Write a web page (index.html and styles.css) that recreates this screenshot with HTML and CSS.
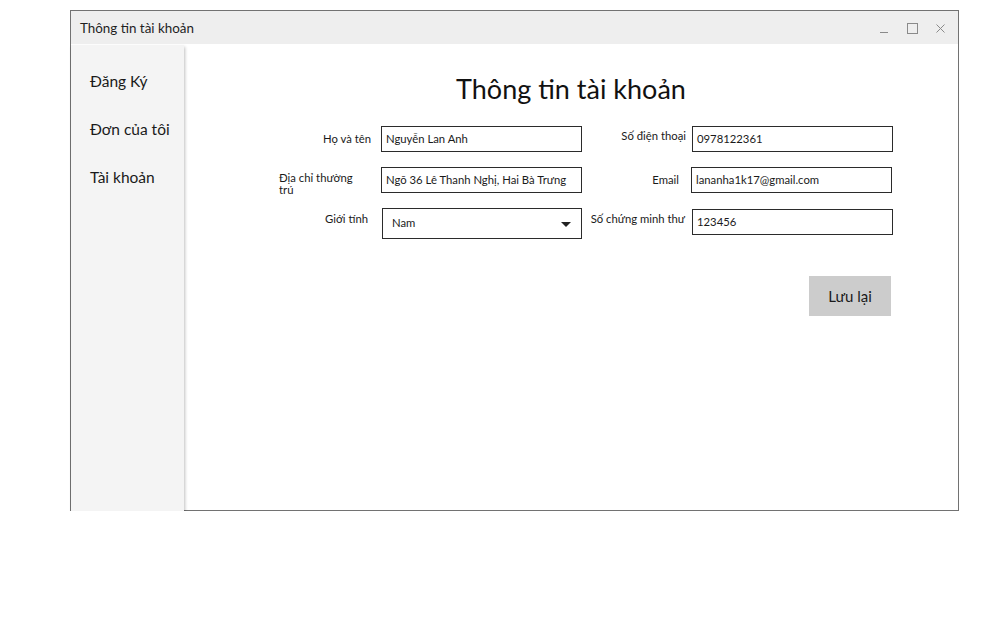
FILE: index.html
```html
<!DOCTYPE html>
<html lang="vi">
<head>
<meta charset="utf-8">
<title>Thông tin tài khoản</title>
<link rel="stylesheet" href="styles.css">
</head>
<body>
<div class="page">
  <div class="window">
    <div class="titlebar">
      <span class="title">Thông tin tài khoản</span>
      <div class="controls">
        <svg class="ctl" width="12" height="12" viewBox="0 0 12 12"><path d="M2 10.5h8" stroke="#8a8a8a" stroke-width="1" fill="none"/></svg>
        <svg class="ctl" width="12" height="12" viewBox="0 0 12 12"><rect x="1.5" y="1.5" width="10" height="10" stroke="#8a8a8a" stroke-width="1" fill="none"/></svg>
        <svg class="ctl" width="12" height="12" viewBox="0 0 12 12"><path d="M2.5 2.5l8 8M10.5 2.5l-8 8" stroke="#8a8a8a" stroke-width="1" fill="none"/></svg>
      </div>
    </div>
    <div class="body">
      <nav class="sidebar">
        <div class="nav-item">Đăng Ký</div>
        <div class="nav-item">Đơn của tôi</div>
        <div class="nav-item">Tài khoản</div>
      </nav>
      <main class="main">
        <h1 class="heading">Thông tin tài khoản</h1>
        <div class="form">
          <div class="label r1">Họ và tên</div>
          <div class="input c2">Nguyễn Lan Anh</div>
          <div class="label label2 up">Số điện thoại</div>
          <div class="input in2">0978122361</div>

          <div class="label addr">Địa chỉ thường trú</div>
          <div class="input c2">Ngõ 36 Lê Thanh Nghị, Hai Bà Trưng</div>
          <div class="label label2 email">Email</div>
          <div class="input in2 shift">lananha1k17@gmail.com</div>

          <div class="label up r3">Giới tính</div>
          <div class="select"><span>Nam</span>
            <svg width="10" height="6" viewBox="0 0 10 6"><path d="M0 0h10L5 5z" fill="#222"/></svg>
          </div>
          <div class="label label2 up cmt">Số chứng minh thư</div>
          <div class="input in2 top1">123456</div>
        </div>
        <div class="actions">
          <button class="btn">Lưu lại</button>
        </div>
      </main>
    </div>
  </div>
</div>
</body>
</html>
```
FILE: styles.css
```css
html, body {
  margin: 0;
  padding: 0;
  background: #ffffff;
}
body {
  font-family: Lato, "Noto Sans", sans-serif;
  color: #1a1a1a;
}
.page {
  padding: 10px 0 0 70px;
}
.window {
  width: 887px;
  height: 499px;
  border: 1px solid #727272;
  display: flex;
  flex-direction: column;
  background: #fff;
}
.titlebar {
  height: 33px;
  background: #eeeeee;
  display: flex;
  align-items: center;
  justify-content: space-between;
  padding: 0 12px 0 9px;
  flex: none;
}
.title {
  font-size: 13.4px;
  color: #1f1f1f;
}
.controls {
  display: flex;
  gap: 16px;
  align-items: center;
}
.ctl { display: block; }
.body {
  flex: 1;
  display: flex;
  min-height: 0;
}
.sidebar {
  width: 113px;
  flex: none;
  background: #f4f4f4;
  margin-top: 1px;
  margin-bottom: -2px;
  padding-top: 12px;
  box-shadow: 1px 2px 3px rgba(0,0,0,0.25);
  position: relative;
  z-index: 1;
  box-sizing: border-box;
}
.nav-item {
  height: 48px;
  line-height: 48px;
  padding-left: 19px;
  font-size: 15.5px;
  color: #1a1a1a;
}
.main {
  flex: 1;
  display: flex;
  flex-direction: column;
  padding-top: 28px;
}
.heading {
  margin: 0;
  font-weight: normal;
  font-size: 27px;
  line-height: 34px;
  text-align: center;
  color: #111;
}
.form {
  margin: 20px 0 0 95px;
  display: grid;
  grid-template-columns: 92px 211px 110px 201px;
  grid-template-rows: 26px 26px 31px;
  row-gap: 15px;
  column-gap: 0;
  font-size: 11.3px;
}
.label {
  display: flex;
  align-items: center;
  justify-content: flex-end;
  color: #1a1a1a;
}
.label.up { align-items: flex-start; padding-top: 3px; }
.label.r3 { padding-right: 3px; padding-top: 4px; }
.label.r1 { padding-bottom: 2px; }
.label2 { padding-right: 6px; }
.label2.email { padding-right: 13px; padding-bottom: 1px; }
.label2.cmt { padding-right: 7px; padding-top: 4px; }
.addr {
  justify-content: flex-start;
  align-items: flex-start;
  width: 80px;
  line-height: 12px;
  padding-top: 5px;
}
.input {
  box-sizing: border-box;
  border: 1px solid #2b2b2b;
  height: 26px;
  width: 201px;
  display: flex;
  align-items: center;
  padding: 0 0 2px 4px;
  white-space: nowrap;
  background: #fff;
}
.input.c2 { margin-left: 10px; }
.input.shift { margin-left: -1px; }
.input.top1 { margin-top: 1px; }
.select {
  box-sizing: border-box;
  border: 1px solid #2b2b2b;
  height: 31px;
  width: 200px;
  margin-left: 11px;
  display: flex;
  align-items: center;
  justify-content: space-between;
  padding: 0 10px 2px 9px;
}
.select svg { display: block; margin-top: 4px; }
.actions {
  width: 614px;
  margin: 37px 0 0 95px;
  display: flex;
  justify-content: flex-end;
}
.btn {
  width: 82px;
  height: 40px;
  margin-right: 2px;
  border: none;
  background: #cccccc;
  font-family: Lato, "Noto Sans", sans-serif;
  font-size: 15px;
  color: #1a1a1a;
  padding: 0 0 1px;
}
```
